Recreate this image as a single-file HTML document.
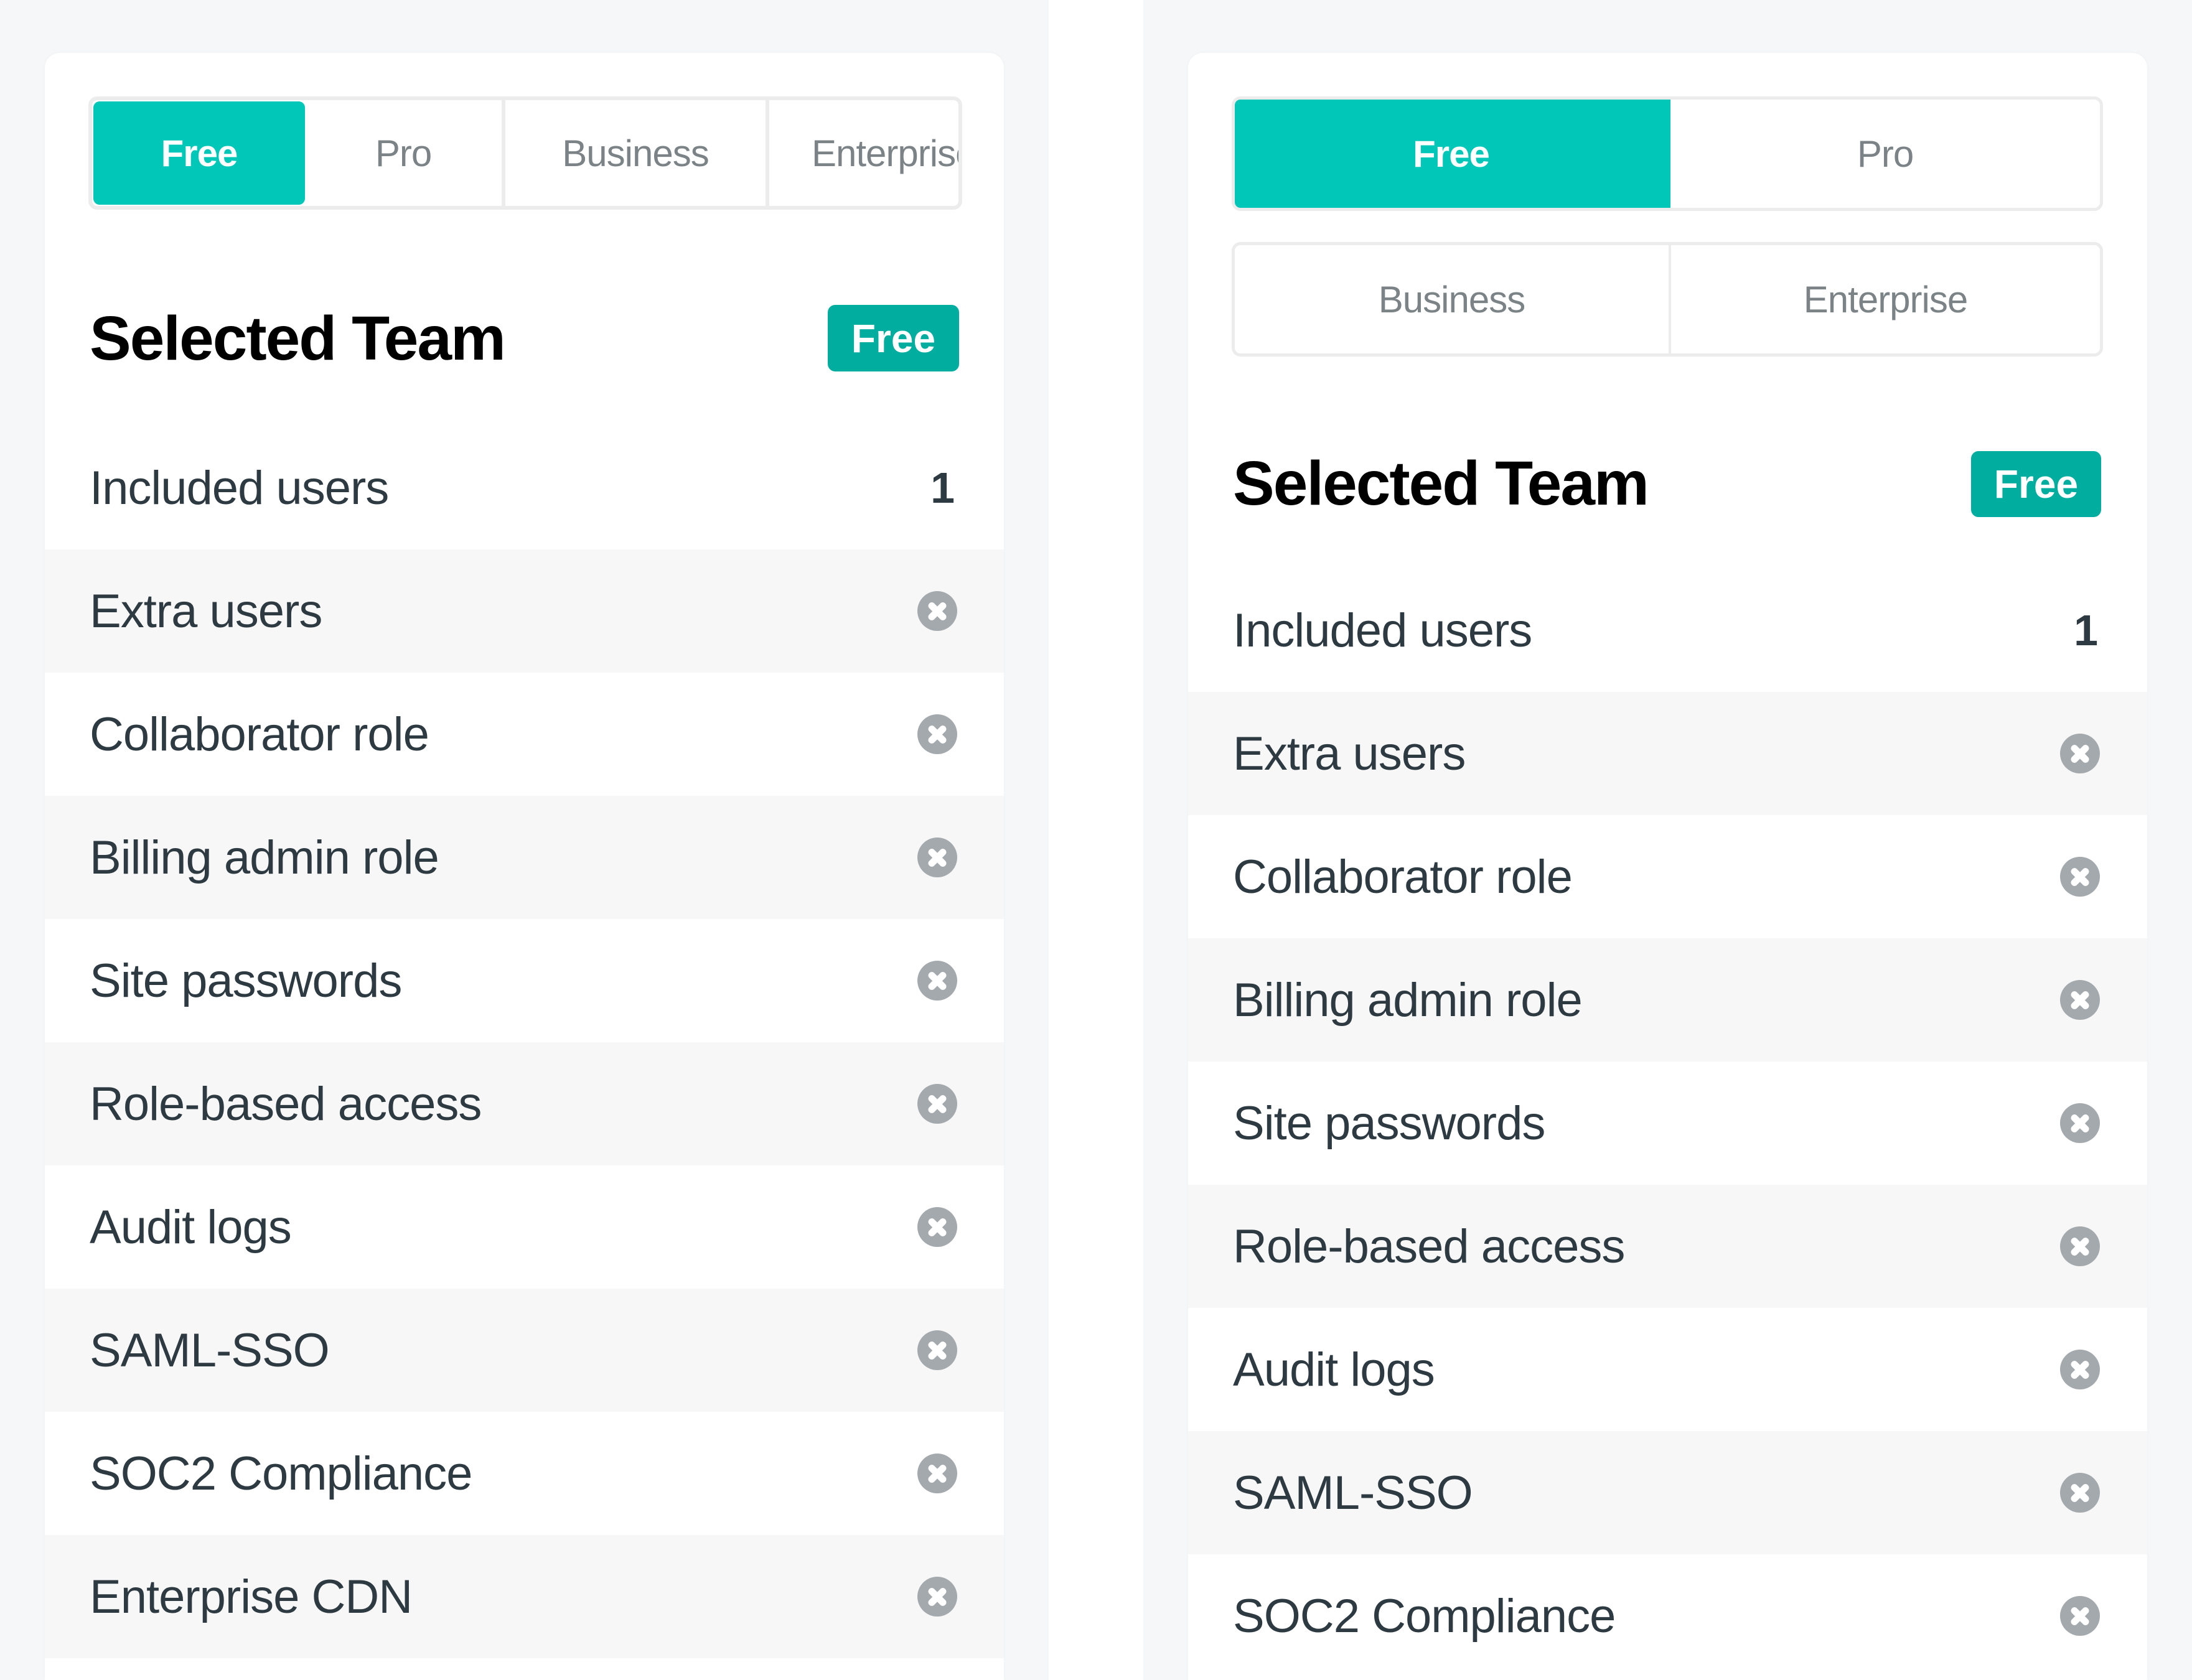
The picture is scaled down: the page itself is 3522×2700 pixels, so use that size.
<!DOCTYPE html>
<html><head><meta charset="utf-8"><style>
*{margin:0;padding:0;box-sizing:border-box}
html,body{width:3522px;height:2700px;overflow:hidden;background:#fff;font-family:"Liberation Sans",Arial,sans-serif}
.panel{position:absolute;top:0;height:2700px;background:#f5f7f8}
.card{position:absolute;top:85px;height:2615px;background:#fff;border-radius:24px 24px 0 0;box-shadow:0 0 6px rgba(0,0,0,.03);overflow:hidden}
.tabs{position:absolute;border:6px solid #ececec;border-radius:14px;background:#fff;overflow:hidden}
.tab{position:absolute;top:0;bottom:0;display:flex;align-items:center;justify-content:center;color:#7b8387;font-size:60px;letter-spacing:-1px}
.tab.on{background:#00c7b7;color:#fff;font-weight:bold}
.h{position:absolute;font-size:100px;font-weight:bold;color:#000;letter-spacing:-2px}
.badge{position:absolute;background:#00ad9f;color:#fff;font-weight:bold;font-size:64px;border-radius:12px;display:flex;align-items:center;justify-content:center}
.row{position:absolute;left:0;right:0;height:198px;display:flex;align-items:center;font-size:76px;color:#2e3a42;letter-spacing:-1px}
.row.g{background:#f7f7f7}
.row span{position:absolute}
.x{position:absolute;width:64px;height:64px;border-radius:50%;background:#a4a9ad}
.x:before,.x:after{content:"";position:absolute;left:14px;top:27px;width:36px;height:11px;background:#fff;border-radius:5px;transform:rotate(45deg)}
.x:after{transform:rotate(-45deg)}
.num{position:absolute;font-weight:bold;font-size:70px;color:#2e3a42}
</style></head><body>
<div class="panel" style="left:0;width:1685px"></div>
<div class="panel" style="left:1837px;width:1685px"></div>

<div class="card" style="left:72px;width:1541px">
  <div class="tabs" style="left:70px;top:70px;width:1404px;height:182px">
    <div class="tab on" style="left:2px;width:340px;top:2px;bottom:2px;border-radius:10px">Free</div>
    <div class="tab" style="left:342px;width:316px">Pro</div>
    <div class="tab" style="left:658px;width:424px;border-left:6px solid #ececec">Business</div>
    <div class="tab" style="left:1082px;width:400px;border-left:6px solid #ececec;justify-content:flex-start;padding-left:68px">Enterprise</div>
  </div>
  <div class="h" style="left:72px;top:402px">Selected Team</div>
  <div class="badge" style="left:1258px;top:405px;width:211px;height:107px">Free</div>
  <div style="position:absolute;left:0;right:0;top:600px">
    <div class="row" style="top:0"><span style="left:72px">Included users</span><div class="num" style="right:80px">1</div></div>
    <div class="row g" style="top:198px"><span style="left:72px">Extra users</span><div class="x" style="left:1402px"></div></div>
    <div class="row" style="top:396px"><span style="left:72px">Collaborator role</span><div class="x" style="left:1402px"></div></div>
    <div class="row g" style="top:594px"><span style="left:72px">Billing admin role</span><div class="x" style="left:1402px"></div></div>
    <div class="row" style="top:792px"><span style="left:72px">Site passwords</span><div class="x" style="left:1402px"></div></div>
    <div class="row g" style="top:990px"><span style="left:72px">Role-based access</span><div class="x" style="left:1402px"></div></div>
    <div class="row" style="top:1188px"><span style="left:72px">Audit logs</span><div class="x" style="left:1402px"></div></div>
    <div class="row g" style="top:1386px"><span style="left:72px">SAML-SSO</span><div class="x" style="left:1402px"></div></div>
    <div class="row" style="top:1584px"><span style="left:72px">SOC2 Compliance</span><div class="x" style="left:1402px"></div></div>
    <div class="row g" style="top:1782px"><span style="left:72px">Enterprise CDN</span><div class="x" style="left:1402px"></div></div>
  </div>
</div>

<div class="card" style="left:1909px;width:1541px">
  <div class="tabs" style="left:70px;top:70px;width:1400px;height:184px;border-width:5px">
    <div class="tab on" style="left:-5px;width:705px;top:-5px;bottom:-5px">Free</div>
    <div class="tab" style="left:700px;right:0">Pro</div>
  </div>
  <div class="tabs" style="left:70px;top:304px;width:1400px;height:184px;border-width:5px">
    <div class="tab" style="left:0;width:697px">Business</div>
    <div class="tab" style="left:697px;right:0;border-left:4px solid #ececec">Enterprise</div>
  </div>
  <div class="h" style="left:72px;top:635px">Selected Team</div>
  <div class="badge" style="left:1258px;top:640px;width:209px;height:106px">Free</div>
  <div style="position:absolute;left:0;right:0;top:829px">
    <div class="row" style="top:0"><span style="left:72px">Included users</span><div class="num" style="right:80px">1</div></div>
    <div class="row g" style="top:198px"><span style="left:72px">Extra users</span><div class="x" style="left:1401px"></div></div>
    <div class="row" style="top:396px"><span style="left:72px">Collaborator role</span><div class="x" style="left:1401px"></div></div>
    <div class="row g" style="top:594px"><span style="left:72px">Billing admin role</span><div class="x" style="left:1401px"></div></div>
    <div class="row" style="top:792px"><span style="left:72px">Site passwords</span><div class="x" style="left:1401px"></div></div>
    <div class="row g" style="top:990px"><span style="left:72px">Role-based access</span><div class="x" style="left:1401px"></div></div>
    <div class="row" style="top:1188px"><span style="left:72px">Audit logs</span><div class="x" style="left:1401px"></div></div>
    <div class="row g" style="top:1386px"><span style="left:72px">SAML-SSO</span><div class="x" style="left:1401px"></div></div>
    <div class="row" style="top:1584px"><span style="left:72px">SOC2 Compliance</span><div class="x" style="left:1401px"></div></div>
  </div>
</div>
</body></html>
